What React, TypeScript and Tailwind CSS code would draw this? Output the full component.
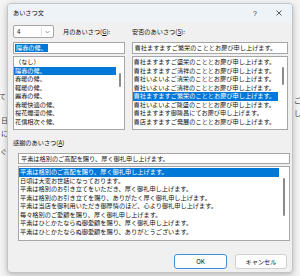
const leftItems = [
  "（なし）",
  "陽春の候、",
  "春暖の候、",
  "軽暖の候、",
  "麗春の候、",
  "春暖快適の候、",
  "桜花爛漫の候、",
  "花信相次ぐ候、",
];

const rightItems = [
  "貴社ますますご盛栄のこととお慶び申し上げます。",
  "貴社ますますご清祥のこととお慶び申し上げます。",
  "貴社いよいよご清栄のこととお慶び申し上げます。",
  "貴社いよいよご清祥のこととお慶び申し上げます。",
  "貴社ますますご繁栄のこととお慶び申し上げます。",
  "貴社いよいよご隆盛のこととお慶び申し上げます。",
  "貴社ますます御隆昌にてお慶び申し上げます。",
  "貴店ますますご発展のこととお慶び申し上げます。",
];

const thanksItems = [
  "平素は格別のご高配を賜り、厚く御礼申し上げます。",
  "日頃は大変お世話になっております。",
  "平素は格別のお引き立てをいただき、厚く御礼申し上げます。",
  "平素は格別のお引き立てを賜り、ありがたく厚く御礼申し上げます。",
  "平素は当店を御利用いただき御厚情のほど、心より御礼申し上げます。",
  "毎々格別のご愛顧を賜り、厚く御礼申し上げます。",
  "平素はひとかたならぬ御愛顧を賜り、厚く御礼申し上げます。",
  "平素はひとかたならぬ御愛顧を賜り、ありがとうございます。",
];

interface ListProps {
  items: string[];
  selected: number;
  className: string;
  thumb: string;
  track: string;
}

function ListBox({ items, selected, className, thumb, track }: ListProps) {
  return (
    <div className={`flex bg-white border border-[#a6a6a6] overflow-hidden text-[6.2px] ${className}`}>
      <div className="flex-1 min-w-0 flex flex-col pt-[1px]">
        {items.map((t, i) => (
          <div
            key={t}
            className={`h-[8.5px] leading-[8.5px] pl-[1px] whitespace-nowrap shrink-0 ${
              i === selected ? "bg-[#0078d7] text-white" : ""
            }`}
          >
            {t}
          </div>
        ))}
      </div>
      <div className={`flex justify-center shrink-0 ${track}`}>
        <div className={`w-[2px] rounded-full bg-[#8a8a8a] ${thumb}`} />
      </div>
    </div>
  );
}

export default function App() {
  return (
    <div
      className="relative w-[300px] h-[276px] overflow-hidden bg-[#f4f4f4] pl-[7px] pt-[3px] text-[6.2px] text-[#111]"
      style={{ fontFamily: '"Noto Sans CJK JP", "Noto Sans", sans-serif' }}
    >
      {/* document behind the dialog */}
      <span className="absolute left-[-1px] top-[92px] text-[7px] leading-[8px] text-[#444]">て</span>
      <span className="absolute left-[1px] top-[116px] text-[7px] leading-[8px] text-[#444]">日</span>
      <span className="absolute left-[1px] top-[129px] text-[7px] leading-[8px] text-[#444]">に</span>
      <span className="absolute left-[0px] top-[147px] text-[7px] leading-[8px] text-[#444]">ぐ</span>
      <span className="absolute left-[294px] top-[96px] text-[7px] leading-[8px] text-[#444]">ご</span>
      <span className="absolute left-[294px] top-[109px] text-[7px] leading-[8px] text-[#444]">し</span>

      <div className="relative w-[286px] h-[270px] flex flex-col bg-[#f0f0f0] border border-[#c4c4c4] rounded-[4px] shadow-[0_2px_6px_rgba(0,0,0,0.25)] overflow-hidden">
        {/* title bar */}
        <div className="h-[18px] shrink-0 flex items-center justify-between bg-[#eef3f8] pl-[5px] pr-[10px]">
          <span className="text-[6.2px]">あいさつ文</span>
          <div className="flex items-center gap-[19px] text-[#333]">
            <span className="text-[7px] leading-none" style={{ fontFamily: '"Liberation Sans", sans-serif' }}>
              ?
            </span>
            <svg width="6" height="6" viewBox="0 0 6 6">
              <path d="M0.5 0.5 L5.5 5.5 M5.5 0.5 L0.5 5.5" stroke="#333" strokeWidth="0.8" />
            </svg>
          </div>
        </div>

        <div className="flex flex-col pl-[5px] pr-[4px]">
          {/* labels row */}
          <div className="flex mt-[3px] h-[13px] items-center">
            <div className="w-[112px] flex items-center">
              <div className="w-[41px] h-[13px] flex items-center bg-white border border-[#a6a6a6] rounded-[2px]">
                <span className="flex-1 pl-[3px]">4</span>
                <div className="w-[1px] h-[9px] bg-[#e3e3e3]" />
                <svg width="9" height="6" viewBox="0 0 9 6" className="mx-[1px]">
                  <path d="M2.5 2 L4.5 4 L6.5 2" fill="none" stroke="#777" strokeWidth="0.7" />
                </svg>
              </div>
              <span className="ml-[9px]">
                月のあいさつ(<span className="underline">G</span>):
              </span>
            </div>
            <span className="ml-[7px]">
              安否のあいさつ(<span className="underline">S</span>):
            </span>
          </div>

          {/* inputs row */}
          <div className="flex gap-[7px] mt-[4px]">
            <div className="w-[112px] h-[12px] flex items-center bg-white border border-[#a6a6a6] pl-[1px]">
              <span className="bg-[#0078d7] text-white leading-[8px] px-[1px]">陽春の候、</span>
            </div>
            <div className="w-[157px] h-[12px] flex items-center bg-white border border-[#a6a6a6] pl-[2px] whitespace-nowrap overflow-hidden">
              貴社ますますご繁栄のこととお慶び申し上げます。
            </div>
          </div>

          {/* lists row */}
          <div className="flex gap-[7px] mt-[2px]">
            <ListBox
              items={leftItems}
              selected={1}
              className="w-[112px] h-[74px]"
              track="w-[8px]"
              thumb="mt-[16px] h-[14px]"
            />
            <ListBox
              items={rightItems}
              selected={4}
              className="w-[157px] h-[74px]"
              track="w-[9px]"
              thumb="mt-[10px] h-[18px]"
            />
          </div>

          {/* thanks section */}
          <div className="mt-[8px] h-[9px] leading-[9px]">
            感謝のあいさつ(<span className="underline">A</span>)
          </div>
          <div className="ml-[5px] w-[272px] flex flex-col">
            <div className="mt-[6px] h-[11px] flex items-center bg-white border border-[#a6a6a6] pl-[2px] whitespace-nowrap overflow-hidden">
              平素は格別のご高配を賜り、厚く御礼申し上げます。
            </div>
            <ListBox
              items={thanksItems}
              selected={0}
              className="mt-[2px] h-[75px]"
              track="w-[10px]"
              thumb="mt-[11px] h-[38px]"
            />
          </div>

          {/* buttons */}
          <div className="flex justify-end gap-[8px] mt-[13px] pr-[1px]">
            <button className="w-[53px] h-[15px] flex items-center justify-center bg-[#fdfdfd] border border-[#3c8fd8] rounded-[3px] text-[6.2px]">
              OK
            </button>
            <button className="w-[52px] h-[15px] flex items-center justify-center bg-[#fdfdfd] border border-[#d0d0d0] rounded-[3px] text-[6.2px]">
              キャンセル
            </button>
          </div>
        </div>
      </div>
    </div>
  );
}
